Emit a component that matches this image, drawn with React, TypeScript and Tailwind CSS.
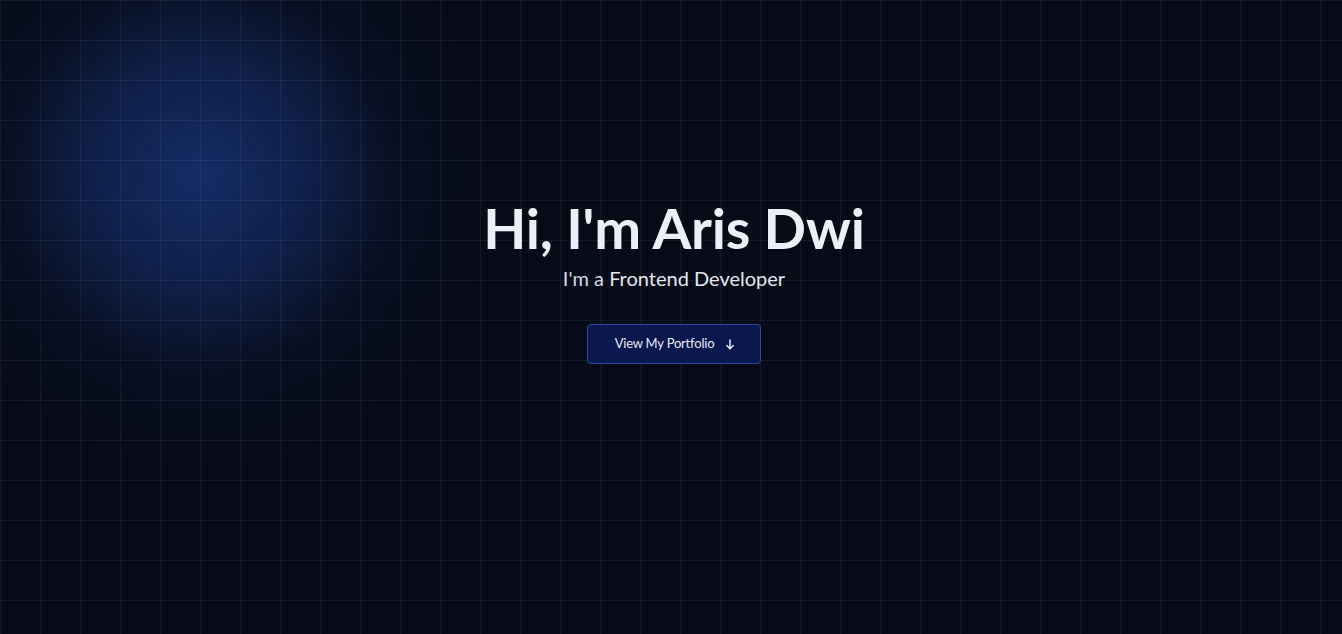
import React from "react";

export default function App() {
  return (
    <div className="relative w-full h-[634px] overflow-hidden bg-[#070b17] font-['Lato','Noto_Sans',sans-serif]">
      <div className="absolute inset-0 bg-[radial-gradient(circle_at_200px_175px,rgba(22,48,110,0.9)_0px,rgba(20,44,102,0.62)_110px,rgba(12,24,58,0.3)_200px,rgba(7,11,23,0)_295px)]" />
      <div className="absolute inset-0 bg-[linear-gradient(to_right,rgba(148,163,210,0.09)_1px,transparent_1px),linear-gradient(to_bottom,rgba(148,163,210,0.09)_1px,transparent_1px)] bg-[size:40px_40px]" />
      <div className="relative flex flex-col items-center pt-[194px] pl-[6px]">
        <h1 className="text-[56px] leading-[68px] font-bold text-[#eceef8] tracking-[-0.2px]">Hi, I'm Aris Dwi</h1>
        <p className="mt-[2px] text-[20px] leading-[28px] text-[#d6d9e6]">
          I'm a <span className="text-[#e4e6f0]">Frontend Developer</span>
        </p>
        <button className="mt-[32px] flex items-center gap-[11px] h-[40px] pl-[27px] pr-[25px] rounded-[4px] bg-[#0b1850] border border-[#2c4aa6] text-[13px] tracking-[-0.2px] text-[#e6e8f4]">
          View My Portfolio
          <svg width="10" height="11" viewBox="0 0 10 11" fill="none" stroke="#e6e8f4" strokeWidth="1.5" strokeLinecap="round" strokeLinejoin="round">
            <path d="M5 1v8.5M1.8 6.5L5 9.7l3.2-3.2" />
          </svg>
        </button>
      </div>
    </div>
  );
}
